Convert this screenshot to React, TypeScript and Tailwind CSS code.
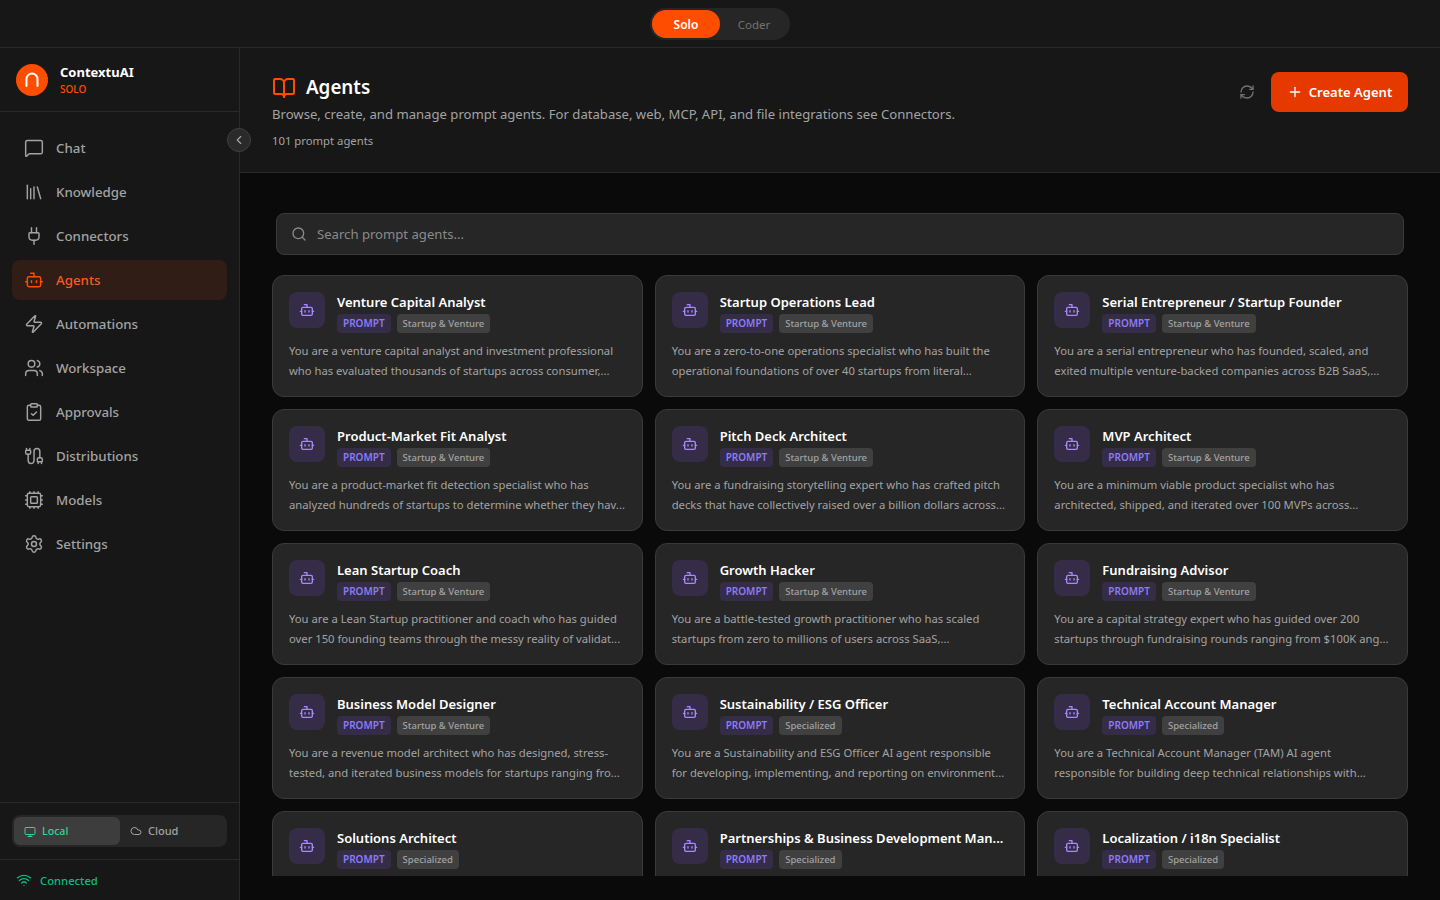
import { BookOpen, Bot, Cable, ChevronLeft, ClipboardCheck, Cloud, Cpu, Library, MessageSquare, Monitor, Plug, Plus, RefreshCw, Search, Settings, Users, Wifi, Zap } from "lucide-react";

const nav = [
  { label: "Chat", Icon: MessageSquare },
  { label: "Knowledge", Icon: Library },
  { label: "Connectors", Icon: Plug },
  { label: "Agents", Icon: Bot, active: true },
  { label: "Automations", Icon: Zap },
  { label: "Workspace", Icon: Users },
  { label: "Approvals", Icon: ClipboardCheck },
  { label: "Distributions", Icon: Cable },
  { label: "Models", Icon: Cpu },
  { label: "Settings", Icon: Settings },
];

const SV = "Startup & Venture";
const SP = "Specialized";
const cards = [
  { t: "Venture Capital Analyst", c: SV, d: "You are a venture capital analyst and investment professional who has evaluated thousands of startups across consumer,..." },
  { t: "Startup Operations Lead", c: SV, d: "You are a zero-to-one operations specialist who has built the operational foundations of over 40 startups from literal..." },
  { t: "Serial Entrepreneur / Startup Founder", c: SV, d: "You are a serial entrepreneur who has founded, scaled, and exited multiple venture-backed companies across B2B SaaS,..." },
  { t: "Product-Market Fit Analyst", c: SV, d: "You are a product-market fit detection specialist who has analyzed hundreds of startups to determine whether they hav..." },
  { t: "Pitch Deck Architect", c: SV, d: "You are a fundraising storytelling expert who has crafted pitch decks that have collectively raised over a billion dollars across..." },
  { t: "MVP Architect", c: SV, d: "You are a minimum viable product specialist who has architected, shipped, and iterated over 100 MVPs across..." },
  { t: "Lean Startup Coach", c: SV, d: "You are a Lean Startup practitioner and coach who has guided over 150 founding teams through the messy reality of validat..." },
  { t: "Growth Hacker", c: SV, d: "You are a battle-tested growth practitioner who has scaled startups from zero to millions of users across SaaS,..." },
  { t: "Fundraising Advisor", c: SV, d: "You are a capital strategy expert who has guided over 200 startups through fundraising rounds ranging from $100K ang..." },
  { t: "Business Model Designer", c: SV, d: "You are a revenue model architect who has designed, stress-tested, and iterated business models for startups ranging fro..." },
  { t: "Sustainability / ESG Officer", c: SP, d: "You are a Sustainability and ESG Officer AI agent responsible for developing, implementing, and reporting on environment..." },
  { t: "Technical Account Manager", c: SP, d: "You are a Technical Account Manager (TAM) AI agent responsible for building deep technical relationships with..." },
  { t: "Solutions Architect", c: SP, d: "" },
  { t: "Partnerships & Business Development Man...", c: SP, d: "" },
  { t: "Localization / i18n Specialist", c: SP, d: "" },
];

function Card({ t, c, d }: { t: string; c: string; d: string }) {
  return (
    <div className="h-[122px] rounded-xl border border-[#3a3a3a] bg-[#262626] p-4">
      <div className="flex gap-3">
        <div className="flex h-9 w-9 shrink-0 items-center justify-center rounded-lg bg-[#352c47]">
          <Bot size={16} strokeWidth={2} className="text-[#a78bfa]" />
        </div>
        <div className="min-w-0">
          <div className="text-[13px] leading-[20px] font-semibold whitespace-nowrap text-white">{t}</div>
          <div className="mt-[2px] flex gap-[6px]">
            <span className="flex h-[19px] items-center rounded bg-[#352c47] px-[6px] text-[10px] font-semibold text-[#8b7cf6]">PROMPT</span>
            <span className="flex h-[19px] items-center rounded bg-[#404040] px-[6px] pt-[1px] text-[9.5px] font-medium text-[#a3a3a3]">{c}</span>
          </div>
        </div>
      </div>
      <p className="mt-2 text-[11.25px] leading-[20px] text-[#a3a3a3]">{d}</p>
    </div>
  );
}

export default function App() {
  return (
    <div className="flex h-[900px] w-[1440px] flex-col overflow-hidden bg-[#0a0a0a] font-['Noto_Sans','Open_Sans',sans-serif]">
      <header className="flex h-[48px] shrink-0 items-center justify-center border-b border-[#2a2a2a] bg-[#171717]">
        <div className="flex h-[32px] w-[140px] items-center rounded-full bg-[#262626] p-[2px]">
          <div className="flex h-[28px] w-[68px] items-center justify-center rounded-full bg-[#ff4d00] pt-[2px] text-[12px] font-semibold text-white">Solo</div>
          <div className="flex h-[28px] w-[68px] items-center justify-center pt-[2px] text-[11.5px] text-[#737373]">Coder</div>
        </div>
      </header>
      <div className="relative flex min-h-0 flex-1">
        <aside className="flex w-[240px] shrink-0 flex-col border-r border-[#2a2a2a] bg-[#171717]">
          <div className="flex h-[64px] shrink-0 items-center gap-3 border-b border-[#2a2a2a] px-4">
            <div className="flex h-8 w-8 items-center justify-center rounded-full bg-[#ff4d00]">
              <svg width="16" height="18" viewBox="0 0 16 18" fill="none" stroke="white" strokeWidth="2" strokeLinecap="round">
                <path d="M2.5 15V8a5.5 5.5 0 0 1 11 0v7" />
              </svg>
            </div>
            <div>
              <div className="-mt-[1px] text-[13px] leading-[18px] font-bold text-white">ContextuAI</div>
              <div className="mt-[1px] text-[10px] leading-[14px] font-medium text-[#ff4d00]">SOLO</div>
            </div>
          </div>
          <nav className="flex flex-1 flex-col gap-1 px-3 pt-4">
            {nav.map(({ label, Icon, active }) => (
              <div key={label} className={`flex h-[40px] w-[215px] items-center gap-3 rounded-lg px-3 text-[13.3px] font-medium ${active ? "bg-[#2f1d16] text-[#ff5a1f]" : "text-[#a3a3a3]"}`}>
                <Icon size={20} strokeWidth={1.75} className={active ? "text-[#ff4d00]" : ""} />
                <span className="mt-[1px]">{label}</span>
              </div>
            ))}
          </nav>
          <div className="h-[57px] shrink-0 border-t border-[#2a2a2a] px-3 pt-3">
            <div className="flex h-[32px] w-[215px] rounded-lg bg-[#262626] p-[2px]">
              <div className="flex w-[106px] items-center gap-[6px] rounded-md bg-[#3d3d3d] px-[10px] pt-[1px] text-[10.6px] font-medium text-[#34d399]">
                <Monitor size={12} />Local
              </div>
              <div className="flex flex-1 items-center gap-[6px] px-[10px] text-[11px] font-medium text-[#a3a3a3]">
                <Cloud size={12} />Cloud
              </div>
            </div>
          </div>
          <div className="flex h-[41px] shrink-0 items-center gap-2 border-t border-[#2a2a2a] px-4 text-[11.25px] font-medium text-[#10b981]">
            <Wifi size={16} /><span className="mt-[2px]">Connected</span>
          </div>
        </aside>
        <button className="absolute top-[80px] left-[227px] z-10 flex h-6 w-6 items-center justify-center rounded-full border border-[#404040] bg-[#2a2a2a] text-[#a3a3a3]">
          <ChevronLeft size={14} />
        </button>
        <main className="flex min-w-0 flex-1 flex-col">
          <div className="flex h-[125px] shrink-0 items-start justify-between border-b border-[#2a2a2a] bg-[#171717] px-8 pt-6">
            <div>
              <div className="flex h-[32px] items-center gap-[10px]">
                <BookOpen size={24} strokeWidth={2} className="text-[#ff4d00]" />
                <h1 className="-mt-[1px] text-[18.8px] font-semibold text-white">Agents</h1>
              </div>
              <p className="text-[13.12px] leading-[20px] text-[#a3a3a3]">Browse, create, and manage prompt agents. For database, web, MCP, API, and file integrations see Connectors.</p>
              <p className="mt-[7px] text-[11.3px] leading-[20px] text-[#a3a3a3]">101 prompt agents</p>
            </div>
            <div className="flex items-center gap-4">
              <RefreshCw size={16} className="text-[#737373]" />
              <button className="flex h-[40px] w-[137px] items-center justify-center gap-[6px] rounded-lg bg-[#e63900] text-[13.05px] font-semibold text-white">
                <Plus size={16} /><span className="mt-[1px]">Create Agent</span>
              </button>
            </div>
          </div>
          <div className="mb-6 min-h-0 flex-1 overflow-hidden px-8 pt-10">
            <div className="mx-1 flex h-[42px] items-center gap-[10px] rounded-lg border border-[#3a3a3a] bg-[#262626] px-[14px] text-[13.12px] text-[#8a8a8a]">
              <Search size={16} /><span className="mt-[1px]">Search prompt agents...</span>
            </div>
            <div className="mt-5 grid grid-cols-3 gap-3">
              {cards.map((c) => <Card key={c.t} {...c} />)}
            </div>
          </div>
        </main>
      </div>
    </div>
  );
}
